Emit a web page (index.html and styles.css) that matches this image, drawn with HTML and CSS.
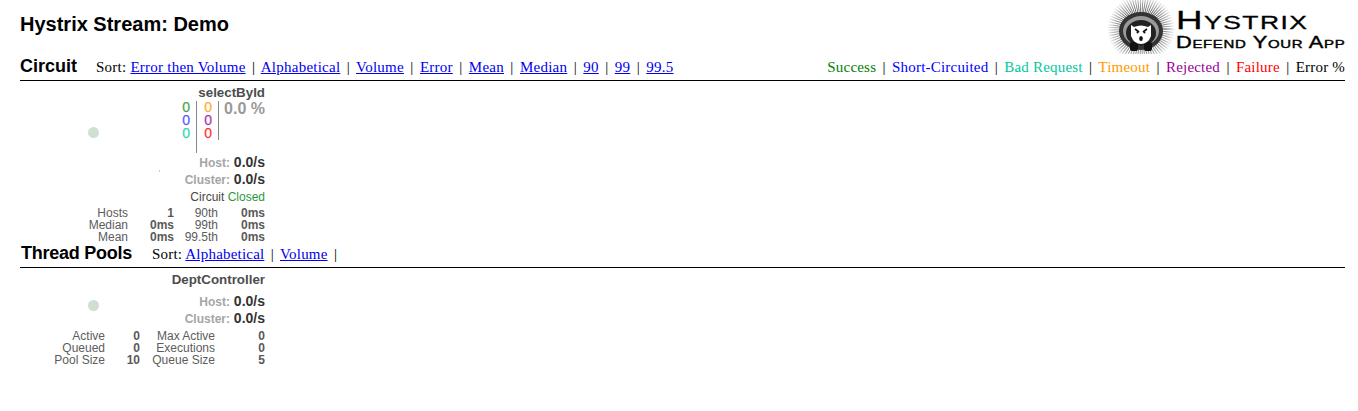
FILE: index.html
```html
<!DOCTYPE html>
<html lang="en">

<head>
  <meta charset="UTF-8">
  <title>Hystrix Stream: Demo</title>
  <link rel="stylesheet" href="styles.css">
</head>

<body>
  <header class="header">
    <h2 class="page-title">Hystrix Stream: Demo</h2>
    <div class="logo">
      <svg class="logo-icon" width="68" height="54" viewBox="0 0 68 54">
        <defs>
          <radialGradient id="spikes" gradientUnits="userSpaceOnUse" cx="33" cy="29" r="34">
            <stop offset="0.55" stop-color="#555"></stop>
            <stop offset="1" stop-color="#fff"></stop>
          </radialGradient>
        </defs>
        <circle cx="33" cy="29" r="24" fill="none" stroke="url(#spikes)" stroke-width="19" stroke-dasharray="1 1.1"></circle>
        <ellipse cx="33" cy="31" rx="22" ry="19" fill="#333"></ellipse>
        <ellipse cx="33" cy="31" rx="18" ry="15" fill="#999"></ellipse>
        <ellipse cx="33" cy="33" rx="15" ry="13" fill="#222"></ellipse>
        <rect x="22" y="42" width="8" height="9" rx="2" fill="#111"></rect>
        <rect x="36" y="42" width="8" height="9" rx="2" fill="#111"></rect>
        <path d="M23 25 L26 27 Q33 24 40 27 L43 25 L43 36 Q40 44 33 44 Q26 44 23 36 Z" fill="#fff"></path>
        <path d="M27 29 L31 32 M39 29 L35 32" stroke="#111" stroke-width="1.6"></path>
        <circle cx="29.5" cy="32.5" r="1" fill="#111"></circle>
        <circle cx="36.5" cy="32.5" r="1" fill="#111"></circle>
        <ellipse cx="33" cy="38.5" rx="1.8" ry="2.6" fill="#111"></ellipse>
      </svg>
      <div class="logo-text">
        <div class="logo-name">Hystrix</div>
        <div class="logo-tag">Defend Your App</div>
      </div>
    </div>
  </header>

  <section>
    <div class="section-head">
      <h3 class="section-title">Circuit</h3>
      <div class="menu sort-circuit">
        Sort:
        <a href="#">Error then Volume</a> <span class="sep">|</span>
        <a href="#">Alphabetical</a> <span class="sep">|</span>
        <a href="#">Volume</a> <span class="sep">|</span>
        <a href="#">Error</a> <span class="sep">|</span>
        <a href="#">Mean</a> <span class="sep">|</span>
        <a href="#">Median</a> <span class="sep">|</span>
        <a href="#">90</a> <span class="sep">|</span>
        <a href="#">99</a> <span class="sep">|</span>
        <a href="#">99.5</a>
      </div>
      <div class="menu legend">
        <span class="success">Success</span> <span class="sep">|</span>
        <span class="short">Short-Circuited</span> <span class="sep">|</span>
        <span class="bad">Bad Request</span> <span class="sep">|</span>
        <span class="timeout">Timeout</span> <span class="sep">|</span>
        <span class="rejected">Rejected</span> <span class="sep">|</span>
        <span class="failure">Failure</span> <span class="sep">|</span>
        <span>Error %</span>
      </div>
    </div>

    <div class="monitor monitor-circuit">
      <span class="dot"></span>
      <span class="tick"></span>
      <p class="name">selectById</p>
      <div class="counters">
        <div class="counter-col col-a">
          <span class="c-success">0</span>
          <span class="c-short">0</span>
          <span class="c-bad">0</span>
        </div>
        <div class="counter-col col-b">
          <span class="c-timeout">0</span>
          <span class="c-rejected">0</span>
          <span class="c-failure">0</span>
        </div>
        <div class="error-rate">0.0 %</div>
      </div>
      <div class="rate"><span class="rate-label">Host:</span> 0.0/s</div>
      <div class="rate"><span class="rate-label">Cluster:</span> 0.0/s</div>
      <div class="circuit-status">Circuit <span class="closed">Closed</span></div>
      <div class="stats stats-circuit">
        <span>Hosts</span><b>1</b><span>90th</span><b>0ms</b>
        <span>Median</span><b>0ms</b><span>99th</span><b>0ms</b>
        <span>Mean</span><b>0ms</b><span>99.5th</span><b>0ms</b>
      </div>
    </div>
  </section>

  <section>
    <div class="section-head section-head-pools">
      <h3 class="section-title title-pools">Thread Pools</h3>
      <div class="menu sort-pools">
        Sort:
        <a href="#">Alphabetical</a> <span class="sep">|</span>
        <a href="#">Volume</a> <span class="sep">|</span>
      </div>
    </div>

    <div class="monitor monitor-pool">
      <span class="dot"></span>
      <p class="name">DeptController</p>
      <div class="rate rate-first"><span class="rate-label">Host:</span> 0.0/s</div>
      <div class="rate"><span class="rate-label">Cluster:</span> 0.0/s</div>
      <div class="stats stats-pool">
        <span>Active</span><b>0</b><span>Max Active</span><b>0</b>
        <span>Queued</span><b>0</b><span>Executions</span><b>0</b>
        <span>Pool Size</span><b>10</b><span>Queue Size</span><b>5</b>
      </div>
    </div>
  </section>
</body>

</html>
```

FILE: styles.css
```css
body {
  margin: 0;
  padding: 0 13px 0 20px;
  background-color: #fff;
  color: #000;
  font-family: "Liberation Sans", Arial, sans-serif;
  overflow: hidden;
}

.header {
  display: flex;
  justify-content: space-between;
  height: 56px;
}

.page-title {
  margin: 0;
  padding-top: 13px;
  font-size: 20px;
  line-height: 23px;
  font-weight: bold;
}

.logo {
  display: flex;
}

.logo-text {
  width: 169px;
  white-space: nowrap;
}

.logo-name {
  margin-top: 6px;
  font-size: 25px;
  line-height: 28px;
  font-variant: small-caps;
  letter-spacing: 1px;
  -webkit-text-stroke: 0.3px #000;
  transform: scaleX(1.47);
  transform-origin: left;
}

.logo-tag {
  margin-top: 0;
  font-size: 16px;
  line-height: 18px;
  font-variant: small-caps;
  letter-spacing: 0.5px;
  -webkit-text-stroke: 0.4px #000;
  transform: scaleX(1.36);
  transform-origin: left;
}

.section-head {
  display: flex;
  align-items: baseline;
  height: 24px;
  border-bottom: 1px solid #000;
}

.section-title {
  margin: 0;
  font-size: 18px;
  line-height: 21px;
  font-weight: bold;
}

.title-pools {
  margin-left: 1px;
  letter-spacing: -0.25px;
}

.menu {
  font-family: "Liberation Serif", "Times New Roman", serif;
  font-size: 15px;
  letter-spacing: 0.2px;
  white-space: nowrap;
}

.menu a {
  color: #00e;
}

.sep {
  margin: 0 2.4px;
}

.sort-circuit {
  margin-left: 19px;
  letter-spacing: 0.24px;
}

.sort-pools {
  margin-left: 20px;
}

.legend {
  margin-left: auto;
}

.success { color: #008000; }
.short { color: #00f; }
.bad { color: #00c8a0; }
.timeout { color: #f90; }
.rejected { color: #909; }
.failure { color: #f00; }

.monitor {
  position: relative;
  width: 245px;
  color: #333;
}

.monitor-circuit {
  height: 162px;
}

.monitor-pool {
  height: 100px;
}

.dot {
  position: absolute;
  left: 68px;
  width: 11px;
  height: 11px;
  border-radius: 50%;
  background-color: #cfdfd2;
}

.monitor-circuit .dot {
  top: 46px;
}

.monitor-pool .dot {
  top: 32px;
}

.tick {
  position: absolute;
  left: 139px;
  top: 89px;
  width: 1px;
  height: 2px;
  background-color: #b5d6ea;
}

.name {
  margin: 0;
  padding-top: 4px;
  font-size: 13.33px;
  line-height: 15px;
  font-weight: bold;
  text-align: right;
  color: #4d4d4d;
}

.counters {
  display: flex;
  justify-content: flex-end;
  align-items: flex-start;
  margin-top: 1px;
  font-size: 14px;
  line-height: 13px;
  -webkit-text-stroke: 0.25px;
  height: 52px;
}

.counter-col {
  display: flex;
  flex-direction: column;
  align-items: flex-end;
  padding-right: 6px;
  border-right: 1px solid #888;
}

.col-a {
  height: 52px;
  box-sizing: border-box;
}

.col-b {
  width: 22px;
  height: 39px;
  box-sizing: border-box;
}

.error-rate {
  width: 46px;
  font-size: 16px;
  font-weight: bold;
  line-height: 16px;
  text-align: right;
  color: #999;
  -webkit-text-stroke: 0;
}

.c-success { color: #4ca64c; }
.c-short { color: #5c5cff; }
.c-bad { color: #33d6b3; }
.c-timeout { color: #ffad33; }
.c-rejected { color: #ad33ad; }
.c-failure { color: #ff3333; }

.rate {
  height: 17px;
  font-size: 14px;
  line-height: 17px;
  font-weight: bold;
  text-align: right;
  color: #333;
}

.rate-label {
  font-size: 12px;
  color: #a5a5a5;
}

.counters + .rate {
  margin-top: 1px;
}

.rate-first {
  margin-top: 6px;
}

.circuit-status {
  font-size: 12px;
  line-height: 18px;
  text-align: right;
  color: #474747;
}

.closed {
  color: #2a9a3c;
}

.stats {
  display: grid;
  font-size: 12px;
  line-height: 12px;
  color: #5c5c5c;
  text-align: right;
}

.stats b {
  font-weight: bold;
  color: #595959;
}

.stats-circuit {
  margin-top: 1px;
  grid-template-columns: 108px 46px 44px 47px;
}

.stats-pool {
  margin-top: 3px;
  grid-template-columns: 85px 35px 75px 50px;
}
```
